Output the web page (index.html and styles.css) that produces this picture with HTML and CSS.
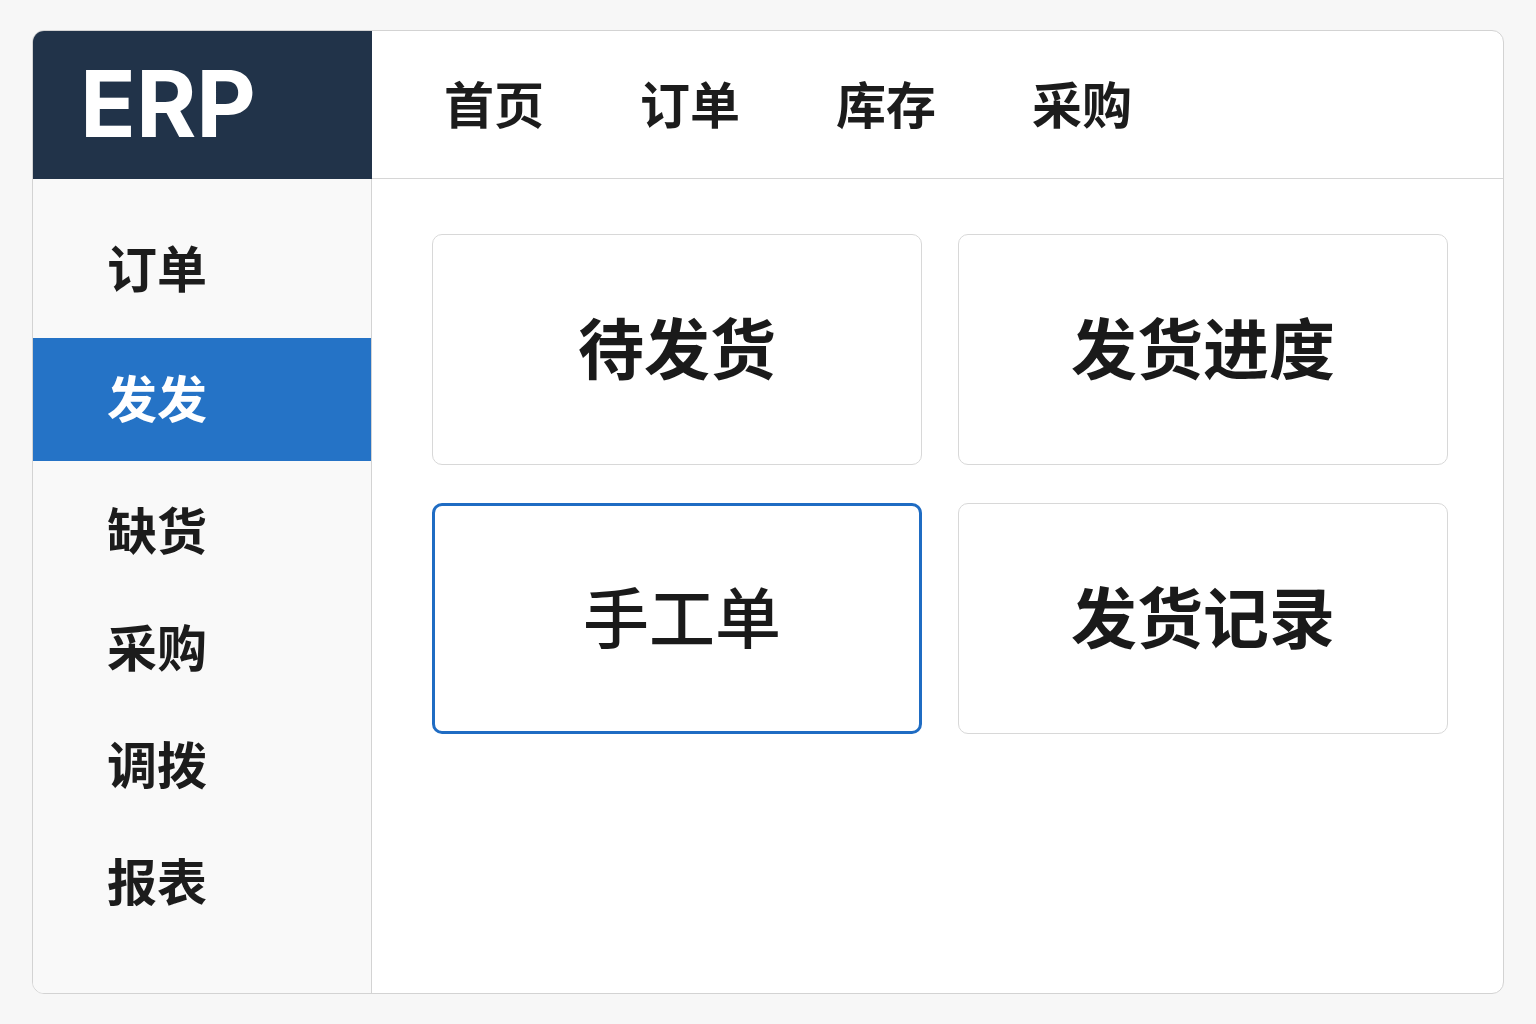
FILE: index.html
```html
<!DOCTYPE html>
<html lang="zh-CN">
<head>
<meta charset="utf-8">
<title>ERP</title>
<link rel="stylesheet" href="styles.css">
</head>
<body>
<div class="frame">
  <div class="logo">ERP</div>
  <header class="topbar">
    <nav class="nav">
      <a class="nav-item">首页</a>
      <a class="nav-item">订单</a>
      <a class="nav-item">库存</a>
      <a class="nav-item">采购</a>
    </nav>
  </header>
  <aside class="sidebar">
    <div class="side-item first">订单</div>
    <div class="side-item active">发发</div>
    <div class="side-item">缺货</div>
    <div class="side-item">采购</div>
    <div class="side-item">调拨</div>
    <div class="side-item">报表</div>
  </aside>
  <main class="content">
    <div class="cards">
      <div class="card">待发货</div>
      <div class="card">发货进度</div>
      <div class="card selected">手工单</div>
      <div class="card">发货记录</div>
    </div>
  </main>
</div>
</body>
</html>
```
FILE: styles.css
```css
* { box-sizing: border-box; }
html, body { margin: 0; padding: 0; }
body {
  background: #f7f7f7;
  padding: 30px 32px;
  font-family: "Noto Sans CJK SC", "Noto Sans", sans-serif;
  color: #1a1a1a;
}
.frame {
  width: 1472px;
  height: 964px;
  border: 1px solid #d3d3d3;
  border-radius: 12px;
  overflow: hidden;
  background: #ffffff;
  display: grid;
  grid-template-columns: 339px 1fr;
  grid-template-rows: 148px 1fr;
}
.logo {
  background: #213349;
  color: #ffffff;
  font-family: Inter, "Liberation Sans", sans-serif;
  font-weight: 700;
  font-size: 92px;
  line-height: 1;
  display: flex;
  align-items: center;
  padding-left: 47px;
  padding-bottom: 2px;
}
.topbar {
  border-bottom: 1px solid #d6d6d6;
  display: flex;
  align-items: center;
  padding-left: 72px;
  padding-bottom: 6px;
}
.nav { display: flex; gap: 96px; }
.nav-item {
  font-size: 50px;
  font-weight: 700;
  color: #1c1c1c;
  line-height: 1;
}
.sidebar {
  background: #f9f9f9;
  border-right: 1px solid #d3d3d3;
  padding-top: 23px;
  display: flex;
  flex-direction: column;
}
.side-item {
  height: 117px;
  flex: none;
  display: flex;
  align-items: center;
  padding-left: 74px;
  padding-bottom: 8px;
  font-size: 50px;
  font-weight: 700;
  color: #1c1c1c;
}
.side-item.first { height: 136px; }
.side-item.active {
  height: 123px;
  margin-bottom: 12px;
  background: #2573c6;
  color: #ffffff;
}
.content {
  padding: 55px 56px 0 60px;
}
.cards {
  display: grid;
  grid-template-columns: 490px 490px;
  grid-auto-rows: 231px;
  column-gap: 36px;
  row-gap: 38px;
}
.card {
  border: 1px solid #d8d8d8;
  border-radius: 10px;
  background: #ffffff;
  display: flex;
  align-items: center;
  justify-content: center;
  padding-bottom: 10px;
  font-size: 66px;
  font-weight: 700;
  color: #1a1a1a;
}
.card.selected {
  border: 3px solid #1f6cc3;
  font-weight: 500;
  padding-left: 10px;
}
```
